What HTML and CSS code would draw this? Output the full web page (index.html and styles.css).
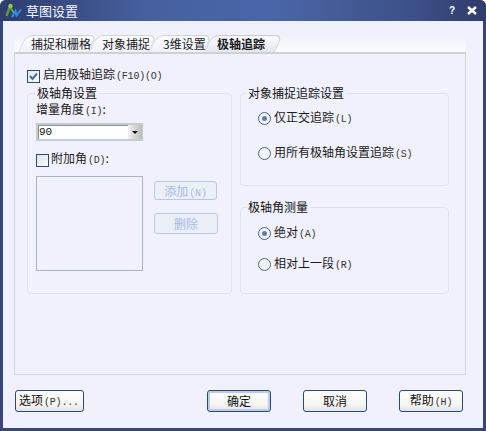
FILE: index.html
```html
<!DOCTYPE html>
<html lang="zh">
<head>
<meta charset="utf-8">
<title>草图设置</title>
<link rel="stylesheet" href="styles.css">
</head>
<body>
<div class="window">
  <header class="titlebar">
    <svg class="app-icon" width="17" height="16" viewBox="0 0 17 16">
      <path d="M1.5 13 L5 3" stroke="#5f9a3a" stroke-width="2.4" fill="none"/>
      <circle cx="5.5" cy="3" r="2.2" fill="#8fd24a"/>
      <path d="M5.5 5 L9 10" stroke="#6fae3e" stroke-width="1.8" fill="none"/>
      <path d="M7 14 L10.5 8 L11.5 12.5 L16 6.5" stroke="#2f8fe8" stroke-width="2" fill="none"/>
    </svg>
    <span class="title-text">草图设置</span>
    <span class="title-btn help">?</span>
    <svg class="title-close" width="10" height="9" viewBox="0 0 10 9"><path d="M1 1 L9 8 M9 1 L1 8" stroke="#fff" stroke-width="2.4"/></svg>
  </header>
  <main class="client">
    <nav class="tabs">
      <span class="tab t1">捕捉和栅格</span>
      <span class="tab t2">对象捕捉</span>
      <span class="tab t3">3维设置</span>
      <span class="tab t4 active">极轴追踪</span>
    </nav>
    <section class="panel">
      <label class="check-row enable"><span class="check checked"><svg width="9" height="9" viewBox="0 0 9 9"><path d="M1 4 L3.5 7 L8 1.5" stroke="#4a6a9a" stroke-width="2" fill="none"/></svg></span><span class="row-text">启用极轴追踪<small>(F10)(O)</small></span></label>
      <div class="columns">
        <div class="group left-group">
          <div class="legend">极轴角设置</div>
          <div class="field-label">增量角度<small>(I)</small>:</div>
          <div class="select"><span class="select-value">90</span><span class="select-arrow"></span></div>
          <label class="check-row extra"><span class="check"></span><span class="row-text">附加角<small>(D)</small>:</span></label>
          <div class="list-row">
            <div class="listbox"></div>
            <div class="side-buttons">
              <span class="btn-disabled">添加<small>(N)</small></span>
              <span class="btn-disabled wide">删除</span>
            </div>
          </div>
        </div>
        <div class="right-col">
          <div class="group track-group">
            <div class="legend">对象捕捉追踪设置</div>
            <label class="radio-row first"><span class="radio on"></span><span>仅正交追踪<small>(L)</small></span></label>
            <label class="radio-row second"><span class="radio"></span><span>用所有极轴角设置追踪<small>(S)</small></span></label>
          </div>
          <div class="group measure-group">
            <div class="legend">极轴角测量</div>
            <label class="radio-row first"><span class="radio on"></span><span>绝对<small>(A)</small></span></label>
            <label class="radio-row third"><span class="radio"></span><span>相对上一段<small>(R)</small></span></label>
          </div>
        </div>
      </div>
    </section>
    <footer class="actions">
      <button class="btn options">选项<small>(P)...</small></button>
      <button class="btn ok default">确定</button>
      <button class="btn cancel">取消</button>
      <button class="btn helpbtn">帮助<small>(H)</small></button>
    </footer>
  </main>
</div>
</body>
</html>
```
FILE: styles.css
```css
* { box-sizing: border-box; }
html, body { margin: 0; padding: 0; }
body { width: 486px; height: 431px; overflow: hidden; background: #fff; font: 12px/14px "Noto Sans CJK SC", "Liberation Sans", sans-serif; color: #1a1a1a; }
small { font: 10px/14px "Liberation Mono", monospace; letter-spacing: -0.2px; color: #333; margin-left: 1px; }

.window { width: 486px; height: 431px; display: flex; flex-direction: column; border-radius: 6px 6px 0 0; overflow: hidden; background: #36457a; }
.titlebar { height: 21px; flex: none; display: flex; align-items: center; padding: 0 9px 0 5px; color: #fff; background: linear-gradient(90deg, #2e3c6e 0%, #46609f 30%, #4a66a8 55%, #3d5088 85%, #2f3c6b 100%); }
.app-icon { flex: none; }
.title-text { margin-left: 4px; font-size: 13px; flex: 1; color: #f4f6fb; }
.title-btn { font: bold 10px/10px "Liberation Sans", sans-serif; }
.help { margin-right: 12px; }
.title-close { flex: none; }

.client { flex: 1; margin: 0 3px 3px; background: #f1f1fd; padding: 14px 0 0 11px; display: flex; flex-direction: column; }
.tabs { width: 452px; height: 17px; display: flex; padding-left: 8px; flex: none; background: linear-gradient(#f1f1fd, #fbfbfe); }
.tab { position: relative; height: 17px; padding: 2px 0 0 9px; white-space: nowrap; z-index: 1; }
.tab::before { content: ""; position: absolute; left: 0; right: 0; top: 0; bottom: 0; border: 1px solid #d0d6d6; border-bottom: none; border-radius: 7px 7px 0 0; transform: skewX(-25deg); z-index: -1; background: linear-gradient(#fcfcff, #f1f1fd); }
.t1 { width: 71px; }
.t2 { width: 60px; padding-left: 9px; }
.t3 { width: 55px; padding-left: 10px; }
.t4 { width: 71px; padding-left: 9px; font-weight: 700; }
.t4::before { background: linear-gradient(#fbfbfe, #e3e6f2); border-color: #c4cccc; }

.panel { width: 452px; height: 323px; flex: none; border: 1px solid #d0d6d8; border-top: 2px solid #ccd2d2; background: #f1f1fd; padding: 15px 0 0 12px; }
.check-row { display: flex; align-items: center; gap: 3px; }
.row-text { padding-bottom: 2px; }
.check { width: 13px; height: 13px; flex: none; border: 1px solid #2e4a70; background: linear-gradient(135deg, #dfe3ea, #f8f9fb); display: flex; align-items: center; justify-content: center; }
.enable { height: 14px; }
.columns { display: grid; grid-template-columns: 205px 209px; column-gap: 8px; margin-top: 10px; }
.group { border: 1px solid #e0e3e6; border-radius: 4px; padding: 0 8px; }
.legend { display: inline-block; height: 14px; margin-top: -8px; background: #f1f1fd; padding: 0 2px 0 1px; color: #111; vertical-align: top; }
.left-group { height: 201px; display: flex; flex-direction: column; align-items: flex-start; }
.field-label { margin-top: 2px; }
.select { width: 107px; height: 18px; margin-top: 4px; border: 2px solid #c4ccd0; border-right-width: 1px; display: flex; background: #fff; box-shadow: inset 1px 1px 0 #8a9494; }
.select-value { flex: 1; font: 11px/15px "Liberation Mono", monospace; padding-left: 1px; color: #111; }
.select-arrow { width: 14px; position: relative; background: linear-gradient(90deg, #f0f0ee, #bdbdb8); }
.select-arrow::after { content: ""; position: absolute; left: 4px; top: 6px; border: 3px solid transparent; border-top: 3px solid #111; border-bottom: none; }
.extra { margin-top: 12px; height: 14px; gap: 2px; }
.list-row { display: flex; margin-top: 9px; gap: 11px; }
.listbox { width: 107px; height: 95px; border: 1px solid #a9b4bc; background: #f1f1fd; }
.side-buttons { display: flex; flex-direction: column; padding-top: 5px; gap: 13px; }
.btn-disabled { width: 63px; height: 19px; border: 1px solid #b8c8e0; border-radius: 3px; background: #ebeff6; color: #a8b8e8; text-align: center; line-height: 17px; }
.btn-disabled small { color: #a8b8e8; }
.btn-disabled.wide { width: 64px; height: 21px; line-height: 19px; }

.right-col { display: flex; flex-direction: column; }
.track-group { height: 93px; padding-left: 6px; }
.measure-group { height: 87px; margin-top: 21px; padding-left: 6px; }
.track-group .legend, .measure-group .legend { margin-left: 0; display: block; width: fit-content; }
.radio-row { display: flex; align-items: center; gap: 3px; margin-left: 11px; height: 14px; }
.first { margin-top: 11px; }
.second { margin-top: 21px; }
.third { margin-top: 17px; }
.measure-group .first { margin-top: 12px; }
.radio { width: 13px; height: 13px; border-radius: 50%; flex: none; border: 1px solid #4a6480; background: #f0f2f6; position: relative; }
.radio.on::after { content: ""; position: absolute; left: 3px; top: 3px; width: 5px; height: 5px; border-radius: 50%; background: #5f7fa8; }

.actions { display: flex; margin-top: 15px; padding-left: 1px; }
.btn { height: 22px; padding: 0; border: 1px solid #2c4a70; border-radius: 3px; background: linear-gradient(#ffffff, #f4f4f0 70%, #dfe4ee); font: inherit; color: #111; width: 64px; }
.options { width: 69px; text-align: left; padding-left: 3px; }
.ok { margin-left: 123px; }
.default { box-shadow: inset 0 0 0 2px #b8cde8; }
.cancel { margin-left: 32px; }
.helpbtn { margin-left: 32px; }
```
